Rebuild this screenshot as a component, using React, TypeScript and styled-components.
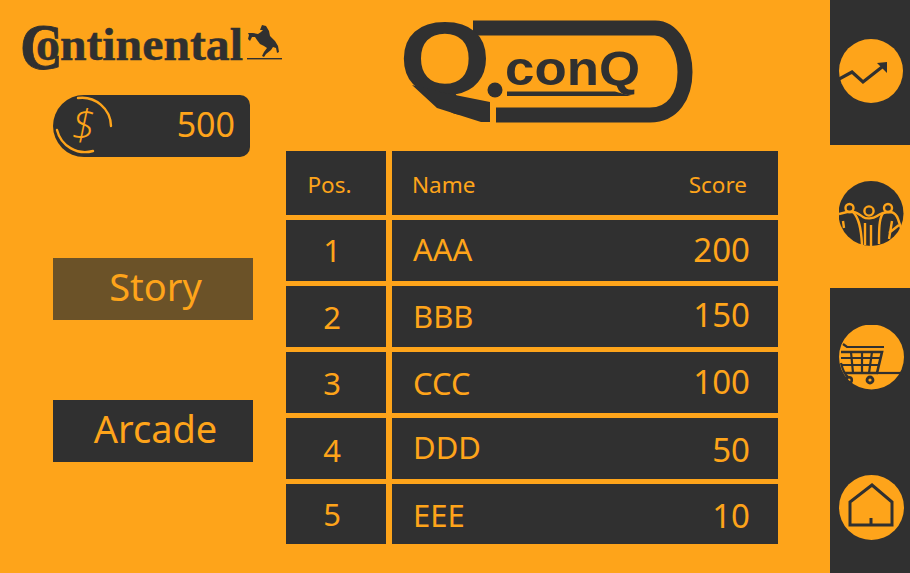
import { Fragment } from "react";
import styled, { createGlobalStyle } from "styled-components";

const ORANGE = "#fea41a";
const DARK = "#303030";

const GlobalStyle = createGlobalStyle`
    html, body {
        margin: 0;
        padding: 0;
        background: ${ORANGE};
    }
    body {
        font-family: "Noto Sans", "Open Sans", sans-serif;
    }
`;

const Screen = styled.div`
    width: 910px;
    height: 573px;
    display: flex;
    overflow: hidden;
    background: ${ORANGE};
    color: ${ORANGE};
`;

const LeftPanel = styled.div`
    width: 286px;
    flex: none;
    padding-left: 53px;
    box-sizing: border-box;
    display: flex;
    flex-direction: column;
`;

const BrandLogo = styled.svg`
    display: block;
    width: 264px;
    height: 50px;
    margin: 23px 0 22px -33px;
    overflow: visible;
`;

const CoinPill = styled.div`
    width: 197px;
    height: 62px;
    background: ${DARK};
    border-radius: 31px 10px 10px 31px;
    display: flex;
    align-items: center;
    justify-content: space-between;
    padding: 0 15px 5px 0;
    box-sizing: border-box;
    font-size: 34px;
`;

const CoinIcon = styled.svg`
    width: 62px;
    height: 62px;
    flex: none;
    margin-bottom: -5px;
`;

const ModeButton = styled.button<{ $active?: boolean }>`
    display: block;
    width: 200px;
    height: 62px;
    border: none;
    padding: 0 0 6px 5px;
    font-family: inherit;
    font-size: 38px;
    color: ${ORANGE};
    background: ${(props) => (props.$active ? "#6b5228" : DARK)};
    margin-top: ${(props) => (props.$active ? "101px" : "80px")};
`;

const CenterPanel = styled.div`
    width: 544px;
    flex: none;
    display: flex;
    flex-direction: column;
`;

const GameLogo = styled.svg`
    display: block;
    width: 320px;
    height: 130px;
    margin: 5px 0 16px 104px;
    overflow: visible;
`;

const ScoreTable = styled.div`
    width: 492px;
    display: grid;
    grid-template-columns: 100px 386px;
    grid-template-rows: 64px repeat(4, 61.3px) 60px;
    column-gap: 6px;
    row-gap: 4.8px;
`;

const Cell = styled.div<{ $center?: boolean; $small?: boolean }>`
    background: ${DARK};
    display: flex;
    align-items: center;
    justify-content: ${(props) => (props.$center ? "center" : "space-between")};
    padding: ${(props) =>
        props.$center
            ? props.$small
                ? "3px 13px 0 0"
                : "0 8px 0 0"
            : props.$small
              ? "3px 31px 0 20px"
              : "0 28px 0 21px"};
    font-size: ${(props) => (props.$small ? "22.5px" : "31px")};
    box-sizing: border-box;
`;

const Value = styled.span<{ $drop?: number }>`
    font-size: 33px;
    margin-top: ${(props) => props.$drop ?? 0}px;
`;

const Label = styled.span<{ $drop?: number }>`
    margin-top: ${(props) => props.$drop ?? 0}px;
`;

const SideBar = styled.div`
    width: 80px;
    flex: none;
    display: flex;
    flex-direction: column;
`;

const SideSection = styled.div<{ $height: number; $light?: boolean; $top: number }>`
    height: ${(props) => props.$height}px;
    padding-top: ${(props) => props.$top}px;
    box-sizing: border-box;
    background: ${(props) => (props.$light ? ORANGE : DARK)};
    display: flex;
    flex-direction: column;
    gap: 85px;
    padding-left: 9px;
`;

const IconDisc = styled.svg`
    width: 65px;
    height: 65px;
    display: block;
`;

const rows = [
    { pos: 1, name: "AAA", score: 200, posDrop: 0, nameDrop: -2, scoreDrop: -2 },
    { pos: 2, name: "BBB", score: 150, posDrop: 0, nameDrop: -2, scoreDrop: -4 },
    { pos: 3, name: "CCC", score: 100, posDrop: 0, nameDrop: 0, scoreDrop: -2 },
    { pos: 4, name: "DDD", score: 50, posDrop: 2, nameDrop: -4, scoreDrop: 2 },
    { pos: 5, name: "EEE", score: 10, posDrop: 0, nameDrop: 2, scoreDrop: 2 },
];

const App: React.FC = () => {
    return (
        <Screen>
            <GlobalStyle />
            <LeftPanel>
                <BrandLogo viewBox="20 23 264 50">
                    <text x="20" y="69" fontFamily="Liberation Serif" fontWeight="bold" fontSize="66" fill={DARK} stroke={DARK} strokeWidth="0.8" textLength="43" lengthAdjust="spacingAndGlyphs">
                        C
                    </text>
                    <text x="36" y="60" fontFamily="Liberation Serif" fontWeight="bold" fontSize="47" fill={DARK} stroke={DARK} strokeWidth="0.5" textLength="207" lengthAdjust="spacingAndGlyphs">
                        ontinental
                    </text>
                    <rect x="247" y="58" width="35" height="1.4" fill={DARK} />
                    <path
                        d="M262 25L266 26L269 31L270 36L275 41L278 46L279 52L277 53L276 48L273 47L271 50L266 54L264 57L262 56L264 52L267 48L264 46L260 44L257 40L255 37L252 37L250 41L248 39L249 35L248 33L253 33L258 34L261 32L263 30L260 30Z"
                        fill={DARK}
                    />
                </BrandLogo>
                <CoinPill>
                    <CoinIcon viewBox="0 0 62 62">
                        <path d="M25 3 A29 29 0 0 1 58 31" fill="none" stroke={ORANGE} strokeWidth="2.4" strokeLinecap="round" />
                        <path d="M4 35 A29 29 0 0 0 40 56" fill="none" stroke={ORANGE} strokeWidth="2.4" strokeLinecap="round" />
                        <text x="30" y="45" textAnchor="middle" fontFamily="Open Sans" fontStyle="italic" fontWeight="300" fontSize="42" fill={ORANGE}>
                            $
                        </text>
                    </CoinIcon>
                    <span>500</span>
                </CoinPill>
                <ModeButton $active>Story</ModeButton>
                <ModeButton>Arcade</ModeButton>
            </LeftPanel>
            <CenterPanel>
                <GameLogo viewBox="390 5 320 130">
                    <path d="M473 28H655C673 28 685 50 685 72C685 96 673 115 650 115H496" fill="none" stroke={DARK} strokeWidth="15" />
                    <text x="399" y="95" fontFamily="Liberation Sans" fontWeight="bold" fontSize="104" fill={DARK} textLength="92" lengthAdjust="spacingAndGlyphs">
                        Q
                    </text>
                    <path d="M412 85L437 108L481 122H490V102L440 92Z" fill={DARK} />
                    <circle cx="495" cy="90" r="7.5" fill={DARK} />
                    <text x="505" y="85" fontFamily="Liberation Sans" fontWeight="bold" fontSize="48" fill={DARK} textLength="135" lengthAdjust="spacingAndGlyphs">
                        conQ
                    </text>
                    <path d="M507 91.5H615L631 96H507Z" fill={DARK} />
                </GameLogo>
                <ScoreTable>
                    <Cell $center $small>Pos.</Cell>
                    <Cell $small>
                        <span>Name</span>
                        <span>Score</span>
                    </Cell>
                    {rows.map((row) => (
                        <Fragment key={row.pos}>
                            <Cell $center>
                                <Label $drop={row.posDrop}>{row.pos}</Label>
                            </Cell>
                            <Cell>
                                <Label $drop={row.nameDrop}>{row.name}</Label>
                                <Value $drop={row.scoreDrop}>{row.score}</Value>
                            </Cell>
                        </Fragment>
                    ))}
                </ScoreTable>
            </CenterPanel>
            <SideBar>
                <SideSection $height={145} $top={39}>
                    <IconDisc viewBox="0 0 65 65">
                        <circle cx="32" cy="32" r="32" fill={ORANGE} />
                        <path d="M0 40L13 33L24 43L43 28" fill="none" stroke={DARK} strokeWidth="3.2" />
                        <path d="M38 24L48 23L48 34Z" fill={DARK} />
                    </IconDisc>
                </SideSection>
                <SideSection $height={143} $light $top={36}>
                    <IconDisc viewBox="0 0 65 65">
                        <circle cx="32" cy="32.5" r="32.5" fill={DARK} />
                        <g fill="none" stroke={ORANGE} strokeWidth="2.4">
                            <circle cx="10.5" cy="27" r="4" />
                            <circle cx="30" cy="30" r="4.6" />
                            <circle cx="49" cy="27" r="4" />
                            <path d="M0 33L8 31H14C18 31 21 34 24 36C27 38 34 38 38 35C42 32 45 31 52 31C56 32 58 35 59 38L62 47" />
                            <path d="M14 31C19 36 22 44 23 64" />
                            <path d="M44 32C40 38 40 48 40 63" />
                            <path d="M32 44V65" />
                            <path d="M26 42V64" />
                            <path d="M4 40L5 47M53 40L50 58M50 52L60 44" />
                        </g>
                    </IconDisc>
                </SideSection>
                <SideSection $height={285} $top={37}>
                    <IconDisc viewBox="0 0 65 65">
                        <circle cx="32.5" cy="32" r="32.5" fill={ORANGE} />
                        <g fill="none" stroke={DARK} strokeWidth="2.2">
                            <path d="M4 19L8 22H45" />
                            <path d="M2 27H43L38 48H6" strokeWidth="2.6" />
                            <path d="M2 33H42M3 40H40" />
                            <path d="M12 27L14 48M23 27V48M33 27L30 48" />
                            <path d="M38 48H64" />
                            <path d="M2 38C4 46 6 50 9 52" />
                            <circle cx="10" cy="55" r="2.8" strokeWidth="2.6" />
                            <circle cx="31" cy="55" r="3" strokeWidth="2.8" />
                        </g>
                    </IconDisc>
                    <IconDisc viewBox="0 0 65 65">
                        <circle cx="32.5" cy="32.5" r="32.5" fill={ORANGE} />
                        <path d="M11 50V27L33 10L53 27V50Z" fill="none" stroke={DARK} strokeWidth="3" />
                        <path d="M32 50V43" stroke={DARK} strokeWidth="3" />
                    </IconDisc>
                </SideSection>
            </SideBar>
        </Screen>
    );
};

export default App;
